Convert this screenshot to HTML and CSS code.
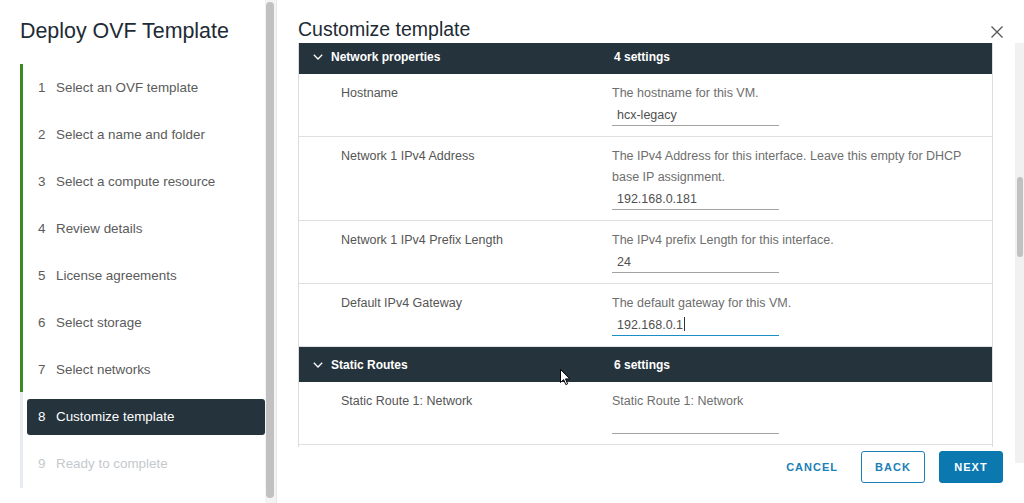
FILE: index.html
```html
<!DOCTYPE html>
<html lang="en">
<head>
  <meta charset="UTF-8">
  <title>Deploy OVF Template</title>
  <link rel="stylesheet" href="styles.css">
</head>
<body>
<div class="page">
  <aside class="wizard-nav">
    <h1 class="wizard-title">Deploy OVF Template</h1>
    <ol class="steps">
      <li><span class="num">1</span>Select an OVF template</li>
      <li><span class="num">2</span>Select a name and folder</li>
      <li><span class="num">3</span>Select a compute resource</li>
      <li><span class="num">4</span>Review details</li>
      <li><span class="num">5</span>License agreements</li>
      <li><span class="num">6</span>Select storage</li>
      <li><span class="num">7</span>Select networks</li>
      <li class="select"><span class="num">8</span>Customize template</li>
      <li class="disabled"><span class="num">9</span>Ready to complete</li>
    </ol>
  </aside>
  <div class="nav-scroll"><div class="nav-thumb"></div></div>

  <main class="wizard-main">
    <div class="main-head">
      <h2 class="main-title">Customize template</h2>
      <svg class="close" width="12" height="12" viewBox="0 0 12 12">
        <path d="M0.5 0.5 L11.5 11.5 M11.5 0.5 L0.5 11.5" stroke="#565656" stroke-width="1.3" fill="none"/>
      </svg>
    </div>
    <div class="main-body">
      <div class="main-col">
        <div class="props">
          <div class="props-inner">
            <div class="group-head">
              <span class="chev"><svg width="10" height="6" viewBox="0 0 10 6"><path d="M0.8 0.8 L5 5 L9.2 0.8" stroke="#fff" stroke-width="1.3" fill="none"/></svg></span>
              <span class="group-name">Network properties</span>
              <span>4 settings</span>
            </div>
            <div class="prop-row">
              <div class="prop-label">Hostname</div>
              <div class="prop-value">
                <div class="prop-desc">The hostname for this VM.</div>
                <div class="field">hcx-legacy</div>
              </div>
            </div>
            <div class="prop-row">
              <div class="prop-label">Network 1 IPv4 Address</div>
              <div class="prop-value">
                <div class="prop-desc">The IPv4 Address for this interface. Leave this empty for DHCP<br>base IP assignment.</div>
                <div class="field">192.168.0.181</div>
              </div>
            </div>
            <div class="prop-row">
              <div class="prop-label">Network 1 IPv4 Prefix Length</div>
              <div class="prop-value">
                <div class="prop-desc">The IPv4 prefix Length for this interface.</div>
                <div class="field">24</div>
              </div>
            </div>
            <div class="prop-row">
              <div class="prop-label">Default IPv4 Gateway</div>
              <div class="prop-value">
                <div class="prop-desc">The default gateway for this VM.</div>
                <div class="field focus">192.168.0.1<span class="caret"></span></div>
              </div>
            </div>
            <div class="group-head">
              <span class="chev"><svg width="10" height="6" viewBox="0 0 10 6"><path d="M0.8 0.8 L5 5 L9.2 0.8" stroke="#fff" stroke-width="1.3" fill="none"/></svg></span>
              <span class="group-name">Static Routes</span>
              <span>6 settings</span>
            </div>
            <div class="prop-row">
              <div class="prop-label">Static Route 1: Network</div>
              <div class="prop-value">
                <div class="prop-desc">Static Route 1: Network</div>
                <div class="field"></div>
              </div>
            </div>
          </div>
        </div>
        <div class="footer">
          <button class="btn btn-link">Cancel</button>
          <button class="btn btn-outline">Back</button>
          <button class="btn btn-primary">Next</button>
        </div>
      </div>
      <div class="main-scroll"><div class="main-thumb"></div></div>
    </div>
  </main>

  <svg class="pointer" width="11" height="17" viewBox="0 0 11 17">
    <path d="M0.5 0.5 L0.5 13.5 L3.6 10.6 L5.8 15.6 L7.6 14.8 L5.5 9.9 L9.8 9.9 Z" fill="#fff" stroke="#000" stroke-width="1"/>
  </svg>
</div>
</body>
</html>
```

FILE: styles.css
```css
* {
  margin: 0;
  padding: 0;
  box-sizing: border-box;
}

body {
  font-family: "Liberation Sans", Arial, sans-serif;
  color: #565656;
  background: #fff;
}

.page {
  position: relative;
  display: flex;
  width: 1024px;
  height: 503px;
  overflow: hidden;
}

/* left wizard nav */
.wizard-nav {
  width: 265px;
  flex: none;
}

.wizard-title {
  padding: 19px 0 0 20px;
  font-size: 21.4px;
  line-height: 24px;
  font-weight: normal;
  color: #1d2b35;
}

.steps {
  list-style: none;
  margin: 21px 0 0 20px;
  padding: 6px 0 0 3px;
  height: 424px;
  background: linear-gradient(#3d8a1e, #3d8a1e) no-repeat 0 0 / 3px 328px,
              linear-gradient(#e6ecf1, #e6ecf1) no-repeat 0 0 / 3px 100%;
}

.steps li {
  height: 36px;
  line-height: 36px;
  margin-bottom: 11px;
  padding-left: 15px;
  font-size: 13.4px;
  color: #5b5b5b;
  white-space: nowrap;
}

.steps .num {
  display: inline-block;
  width: 18px;
}

.steps li.select {
  margin-left: 4px;
  padding-left: 11px;
  background: #25333d;
  border-radius: 3px;
  color: #fff;
}

.steps li.disabled {
  color: #c4c9cd;
}

.nav-scroll {
  width: 12px;
  flex: none;
  background: #f3f3f3;
  border-right: 1px solid #e3e9ee;
  padding: 2px 2px 5px 1px;
}

.nav-thumb {
  height: 100%;
  background: #c1c1c1;
  border-radius: 4px;
}

/* main panel */
.wizard-main {
  flex: 1;
  padding-left: 21px;
}

.main-head {
  width: 705px;
  height: 43px;
  display: flex;
  justify-content: space-between;
}

.main-title {
  margin-top: 17px;
  font-size: 19.5px;
  line-height: 24px;
  font-weight: normal;
  color: #1d2b35;
}

.close {
  margin-top: 26px;
}

.main-body {
  display: flex;
  align-items: flex-start;
}

.main-col {
  width: 705px;
}

.props {
  width: 695px;
  height: 404px;
  overflow: hidden;
  border-left: 1px solid #dcdcdc;
  border-right: 1px solid #dcdcdc;
}

.props-inner {
  margin-top: -4px;
}

.group-head {
  display: grid;
  grid-template-columns: 32px 283px 1fr;
  align-items: center;
  height: 35px;
  background: #25333d;
  color: #fff;
  font-size: 12px;
  font-weight: bold;
}

.chev {
  display: flex;
  justify-content: flex-end;
  padding-right: 8px;
}

.prop-row {
  display: grid;
  grid-template-columns: 271px 1fr;
  padding: 9px 0 10px 42px;
  border-bottom: 1px solid #e0e0e0;
  font-size: 12.5px;
  line-height: 21px;
}

.prop-label {
  color: #555;
}

.prop-desc {
  color: #6e6e6e;
  white-space: nowrap;
}

.field {
  width: 167px;
  height: 22px;
  padding: 2px 0 0 5px;
  line-height: 19px;
  border-bottom: 1px solid #a3a3a3;
  color: #4f4f4f;
}

.field.focus {
  border-bottom-color: #1a8fc6;
}

.caret {
  display: inline-block;
  width: 1px;
  height: 14px;
  margin-left: 1px;
  vertical-align: -2px;
  background: #333;
}

.footer {
  display: flex;
  justify-content: flex-end;
  padding-top: 4px;
}

.btn {
  height: 32px;
  font-family: inherit;
  font-size: 11px;
  font-weight: bold;
  letter-spacing: 1px;
  text-transform: uppercase;
  border-radius: 3px;
  cursor: pointer;
}

.btn-link {
  padding: 0 12px;
  margin-right: 11px;
  border: none;
  background: none;
  color: #1a80b6;
}

.btn-outline {
  width: 64px;
  margin-right: 14px;
  border: 1px solid #1a80b6;
  background: #fff;
  color: #1a80b6;
}

.btn-primary {
  width: 64px;
  border: 1px solid #0b78b0;
  background: #0b78b0;
  color: #fff;
}

.main-scroll {
  width: 9px;
  height: 420px;
  margin-left: 12px;
  padding: 134px 1px 0 2px;
  background: #f1f1f1;
}

.main-thumb {
  height: 80px;
  background: #c1c1c1;
  border-radius: 3px;
}

.pointer {
  position: absolute;
  left: 560px;
  top: 369px;
}
```
